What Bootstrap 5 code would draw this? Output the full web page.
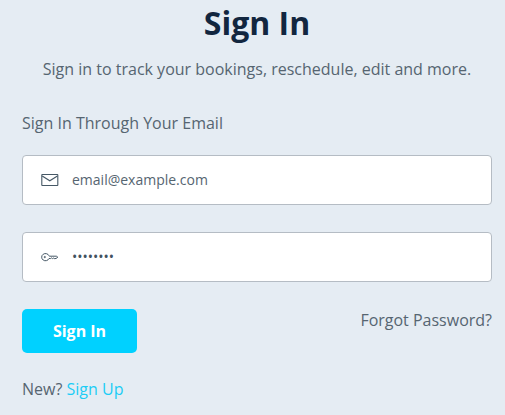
<!DOCTYPE html>
<html lang="en">
<head>
<meta charset="utf-8">
<meta name="viewport" content="width=device-width, initial-scale=1">
<title>Sign In</title>
<link href="https://cdn.jsdelivr.net/npm/bootstrap@5.3.0/dist/css/bootstrap.min.css" rel="stylesheet">
<style>
  body { background: #e5ecf3; color: #566571; font-family: "Open Sans", sans-serif; font-size: 16px; line-height: 24px; }
  .signin-page { padding: 0 13px 12px 22px; }
  .signin-title { color: #12263f; font-size: 32px; line-height: 46px; }
  .signin-intro { margin: 11px 0 30px; }
  .signin-legend { margin-bottom: 20px; }
  .field-box { height: 50px; margin-bottom: 27px; padding: 0 18px; background: #fff; border: 1px solid #b5bcc4; border-radius: 4px; gap: 13px; }
  .field-box svg { width: 18px; height: 18px; stroke: #465866; fill: none; }
  .field-box .form-control, .field-box .form-control:focus { color: #566571; font-size: 14px; line-height: 20px; background: transparent; box-shadow: none; }
  .field-box .form-control::placeholder { color: #566571; opacity: 1; }
  .field-box #password::placeholder { color: #42525f; }
  .btn-signin { --bs-btn-color: #fff; --bs-btn-bg: #00d1ff; --bs-btn-hover-color: #fff; --bs-btn-hover-bg: #00bce6; --bs-btn-active-color: #fff; --bs-btn-active-bg: #00a8cc; --bs-btn-border-radius: 5px; padding: 10px 30px; line-height: 24px; min-width: 115px; }
  .link-forgot { margin-top: -1px; }
  .link-signup { color: #1ccdf6; }
  .signin-foot { margin: 24px 0 0; }
</style>
</head>
<body>
<main class="signin-page container-fluid">
  <h1 class="signin-title fw-bold text-center mb-0">Sign In</h1>
  <p class="signin-intro text-center">Sign in to track your bookings, reschedule, edit and more.</p>
  <form>
    <p class="signin-legend">Sign In Through Your Email</p>
    <div class="field-box d-flex align-items-center">
      <label for="email" class="d-flex flex-shrink-0">
        <svg viewBox="0 0 18 18" role="img" aria-label="Email"><rect x=".8" y="3.5" width="16" height="11" rx=".4" stroke-width="1.1"/><path d="M1.2 5 8.8 9.8 16.4 5" stroke-width="1.1"/></svg>
      </label>
      <input id="email" type="email" class="form-control border-0 p-0" placeholder="email@example.com" autocomplete="email">
    </div>
    <div class="field-box d-flex align-items-center">
      <label for="password" class="d-flex flex-shrink-0">
        <svg viewBox="0 0 18 18" role="img" aria-label="Password"><path d="M8 7.8A3.8 3.6 0 1 0 8 10.5L9.7 10.5 10.5 9.9 11.4 10.6 12.3 10 13.2 10.6 15 10.5 16.8 9.2 15.4 8.2 8.2 8.2"/><circle cx="3.8" cy="9.1" r=".8" fill="#465866" stroke-width=".4"/></svg>
      </label>
      <input id="password" type="password" class="form-control border-0 p-0" placeholder="••••••••" autocomplete="current-password">
    </div>
    <div class="d-flex justify-content-between align-items-start">
      <button type="submit" class="btn btn-signin border-0 fw-bold">Sign In</button>
      <a href="#" class="link-forgot text-reset text-decoration-none">Forgot Password?</a>
    </div>
  </form>
  <p class="signin-foot">New? <a href="#" class="link-signup text-decoration-none">Sign Up</a></p>
</main>
<script src="https://cdn.jsdelivr.net/npm/bootstrap@5.3.0/dist/js/bootstrap.bundle.min.js"></script>
</body>
</html>
